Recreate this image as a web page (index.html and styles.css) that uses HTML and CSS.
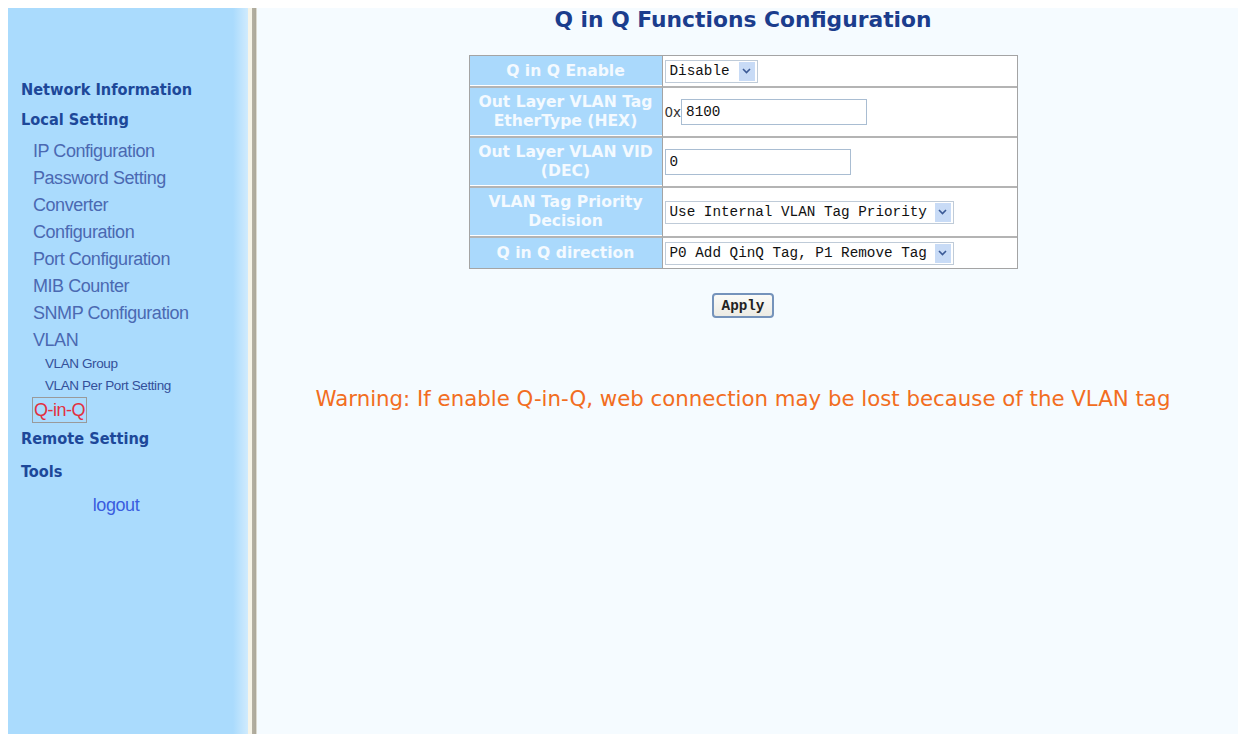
FILE: index.html
```html
<!DOCTYPE html>
<html lang="en">
<head>
<meta charset="utf-8">
<title>Q in Q Functions Configuration</title>
<link rel="stylesheet" href="styles.css">
</head>
<body>
<div class="page">
  <nav class="sidebar">
    <a class="nav-head" href="#">Network Information</a>
    <a class="nav-head" href="#">Local Setting</a>
    <div class="nav-sub">
      <a href="#">IP Configuration</a>
      <a href="#">Password Setting</a>
      <a href="#">Converter</a>
      <a href="#">Configuration</a>
      <a href="#">Port Configuration</a>
      <a href="#">MIB Counter</a>
      <a href="#">SNMP Configuration</a>
      <a href="#">VLAN</a>
    </div>
    <div class="nav-subsub">
      <a href="#">VLAN Group</a>
      <a href="#">VLAN Per Port Setting</a>
    </div>
    <div class="nav-active-row"><a class="nav-active" href="#">Q-in-Q</a></div>
    <a class="nav-head nav-remote" href="#">Remote Setting</a>
    <a class="nav-head nav-tools" href="#">Tools</a>
    <a class="nav-logout" href="#">logout</a>
  </nav>
  <div class="divider"></div>
  <main class="content">
    <h1 class="title">Q in Q Functions Configuration</h1>
    <table class="config">
      <tr class="row-short">
        <th>Q in Q Enable</th>
        <td>
          <span class="select">
            <select class="sel-short"><option>Disable</option></select>
            <span class="arrow"><svg width="9" height="6" viewBox="0 0 9 6"><path d="M1 1 L4.5 4.5 L8 1" fill="none" stroke="#3b5a96" stroke-width="1.6"/></svg></span>
          </span>
        </td>
      </tr>
      <tr class="row-tall">
        <th>Out Layer VLAN Tag<br>EtherType (HEX)</th>
        <td><span class="prefix">0x</span><input class="text-input" type="text" value="8100"></td>
      </tr>
      <tr class="row-tall">
        <th>Out Layer VLAN VID<br>(DEC)</th>
        <td><input class="text-input" type="text" value="0"></td>
      </tr>
      <tr class="row-tall">
        <th>VLAN Tag Priority<br>Decision</th>
        <td>
          <span class="select">
            <select class="sel-long"><option>Use Internal VLAN Tag Priority</option></select>
            <span class="arrow"><svg width="9" height="6" viewBox="0 0 9 6"><path d="M1 1 L4.5 4.5 L8 1" fill="none" stroke="#3b5a96" stroke-width="1.6"/></svg></span>
          </span>
        </td>
      </tr>
      <tr class="row-short">
        <th>Q in Q direction</th>
        <td>
          <span class="select">
            <select class="sel-long"><option>P0 Add QinQ Tag, P1 Remove Tag</option></select>
            <span class="arrow"><svg width="9" height="6" viewBox="0 0 9 6"><path d="M1 1 L4.5 4.5 L8 1" fill="none" stroke="#3b5a96" stroke-width="1.6"/></svg></span>
          </span>
        </td>
      </tr>
    </table>
    <button class="apply" type="button">Apply</button>
    <p class="warning">Warning: If enable Q-in-Q, web connection may be lost because of the VLAN tag</p>
  </main>
</div>
</body>
</html>
```
FILE: styles.css
```css
html, body {
  margin: 0;
  padding: 0;
  background: #ffffff;
}

.page {
  display: flex;
  height: 734px;
  padding: 8px 0 0 8px;
  box-sizing: border-box;
}

/* left navigation frame */
.sidebar {
  width: 240px;
  flex: none;
  display: flex;
  flex-direction: column;
  align-items: flex-start;
  padding-top: 67px;
  box-sizing: border-box;
  background: linear-gradient(to right, #aadbfd 0, #aadbfd 225px, #d0ebfd 240px);
  font-family: "Liberation Sans", Arial, sans-serif;
}

.sidebar a {
  text-decoration: none;
}

.nav-head {
  display: block;
  padding-left: 13px;
  height: 30px;
  line-height: 30px;
  font-family: "DejaVu Sans Condensed", "DejaVu Sans", sans-serif;
  font-weight: bold;
  font-size: 16.2px;
  color: #1d4899;
}

.nav-sub {
  display: flex;
  flex-direction: column;
  margin-top: 3px;
  padding-left: 25px;
}

.nav-sub a {
  height: 27px;
  line-height: 27px;
  font-size: 18px;
  letter-spacing: -0.45px;
  color: #4a69b2;
}

.nav-subsub {
  display: flex;
  flex-direction: column;
  margin-top: -1px;
  padding-left: 37px;
}

.nav-subsub a {
  height: 22px;
  line-height: 22px;
  font-size: 13.5px;
  letter-spacing: -0.4px;
  color: #33509a;
}

.nav-active-row {
  padding-left: 24px;
}

.nav-active {
  display: block;
  height: 24px;
  line-height: 24px;
  padding: 0 1px;
  border: 1px solid #9a9a9a;
  font-size: 18px;
  letter-spacing: -0.5px;
  color: #e33040;
}

.nav-remote {
  margin-top: 1px;
}

.nav-tools {
  margin-top: 3px;
}

.nav-logout {
  display: block;
  align-self: stretch;
  margin-top: 3px;
  padding-right: 24px;
  height: 30px;
  line-height: 30px;
  text-align: center;
  font-size: 18px;
  letter-spacing: -0.4px;
  color: #3a5ddf;
}

/* frame border between the two panes */
.divider {
  width: 9px;
  flex: none;
  background: linear-gradient(to right, #f6f4e8 0, #f6f4e8 4px, #b4b0a3 4px, #aca899 8px, #dcdad0 8px);
}

/* main frame */
.content {
  flex: 1;
  background: #f5fbff;
  display: flex;
  flex-direction: column;
  align-items: center;
  padding-right: 9px;
}

.title {
  margin: 0;
  height: 24px;
  line-height: 24px;
  font-family: "DejaVu Sans", Verdana, sans-serif;
  font-weight: bold;
  font-size: 21.8px;
  color: #1b3d8d;
}

.config {
  margin-top: 23px;
  width: 549px;
  border-collapse: separate;
  border-spacing: 0;
  border: 1px solid #a4a4a4;
  background: #ffffff;
}

.config th,
.config td {
  padding: 0;
  border-bottom: 2px solid #b4b4b4;
  box-shadow: inset 0 -1px 0 #ffffff;
}

.config tr:last-child th,
.config tr:last-child td {
  border-bottom: 0;
  box-shadow: none;
}

.config th {
  width: 192px;
  background: #aad9fc;
  border-right: 1px solid #a4a4a4;
  color: #f4faff;
  font-family: "DejaVu Sans", Verdana, sans-serif;
  font-weight: bold;
  font-size: 15.6px;
  line-height: 19px;
  text-align: center;
  white-space: nowrap;
}

.config td {
  padding-left: 2px;
  text-align: left;
}

.row-short th,
.row-short td {
  height: 30px;
}

.row-tall th,
.row-tall td {
  height: 48px;
}

.select {
  display: inline-flex;
  align-items: center;
  vertical-align: middle;
  height: 23px;
  box-sizing: border-box;
  border: 1px solid #bfcbd8;
  background: #ffffff;
}

.select select {
  -webkit-appearance: none;
  appearance: none;
  border: 0;
  outline: 0;
  background: transparent;
  height: 100%;
  padding: 0 0 0 4px;
  margin: 0;
  font-family: "Liberation Mono", "Courier New", monospace;
  font-size: 14.3px;
  color: #111111;
}

.sel-short {
  width: 73px;
}

.sel-long {
  width: 269px;
}

.arrow {
  width: 16px;
  height: 19px;
  margin-right: 2px;
  display: flex;
  align-items: center;
  justify-content: center;
  background: #c8dbf6;
}

.prefix {
  vertical-align: middle;
  font-family: "DejaVu Sans", Verdana, sans-serif;
  font-size: 13.5px;
  color: #333333;
}

.text-input {
  vertical-align: middle;
  width: 186px;
  height: 26px;
  box-sizing: border-box;
  margin: 0;
  padding: 0 4px;
  border: 1px solid #a9bdd2;
  background: #ffffff;
  font-family: "Liberation Mono", "Courier New", monospace;
  font-size: 14.3px;
  color: #111111;
}

.apply {
  margin-top: 24px;
  width: 62px;
  height: 25px;
  padding: 0;
  border: 2px solid #7593bb;
  border-radius: 4px;
  background: linear-gradient(#fbfbf8, #ecebe4);
  font-family: "Liberation Mono", "Courier New", monospace;
  font-weight: bold;
  font-size: 14.3px;
  color: #222222;
}

.warning {
  margin: 69px 0 0 0;
  height: 24px;
  line-height: 24px;
  font-family: "DejaVu Sans", Verdana, sans-serif;
  font-size: 21.3px;
  color: #f26d21;
  white-space: nowrap;
}
```
